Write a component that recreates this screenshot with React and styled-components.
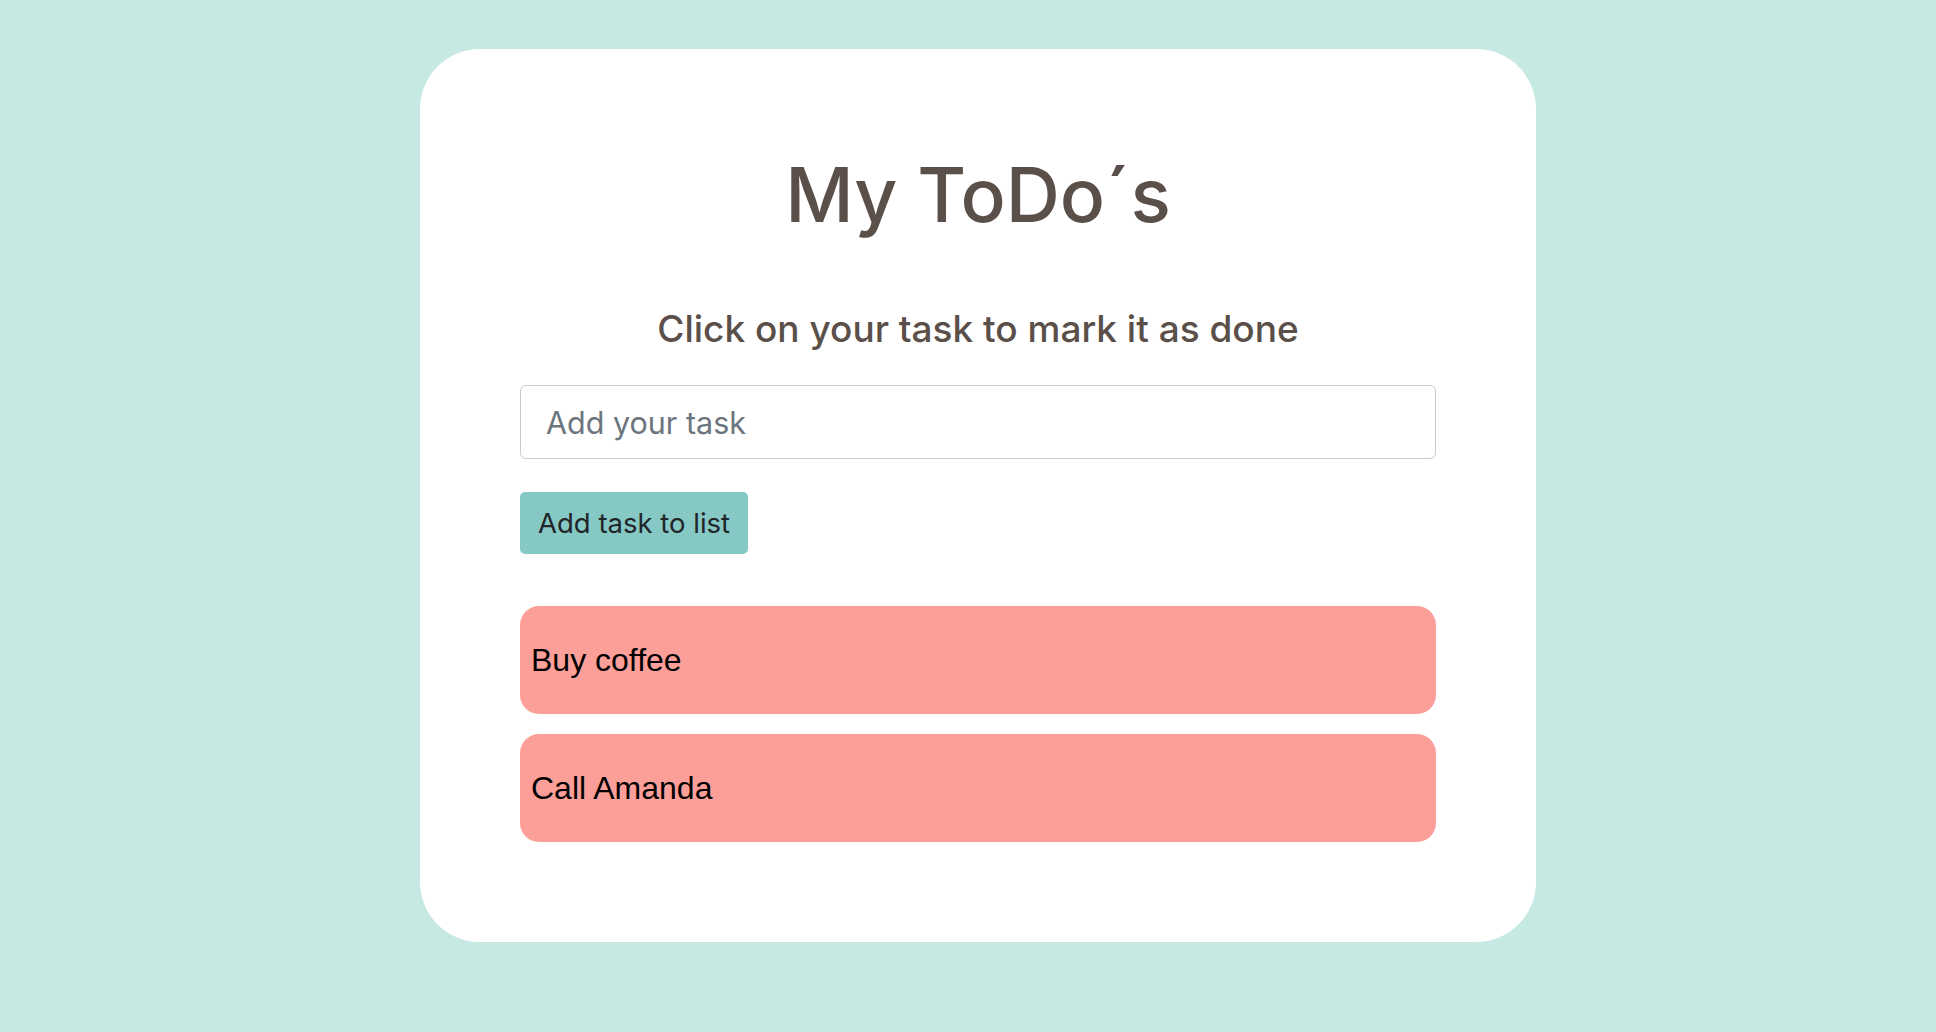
import React, { useState } from "react";
import styled, { createGlobalStyle } from "styled-components";

const GlobalStyle = createGlobalStyle`
    * { box-sizing: border-box; }
    body {
        margin: 0;
        background: #c6e9e3;
        font-family: 'Inter', 'Roboto', sans-serif;
    }
`;

function App() {
    const [tasks, setTasks] = useState([
        { text: "Buy coffee", done: false },
        { text: "Call Amanda", done: false },
    ]);
    const [value, setValue] = useState("");

    const handleAdd = () => {
        if (!value.trim()) return;
        setTasks([...tasks, { text: value, done: false }]);
        setValue("");
    };

    const handleToggle = index => {
        setTasks(tasks.map((t, i) => (i === index ? { ...t, done: !t.done } : t)));
    };

    return (
        <Page>
            <GlobalStyle />
            <Card>
                <Title>My ToDo´s</Title>
                <Subtitle>Click on your task to mark it as done</Subtitle>
                <Input
                    placeholder="Add your task"
                    value={value}
                    onChange={e => setValue(e.target.value)}
                />
                <AddButton onClick={handleAdd}>Add task to list</AddButton>
                <TaskList>
                    {tasks.map((task, id) => (
                        <TaskItem key={id} done={task.done} onClick={() => handleToggle(id)}>
                            {task.text}
                        </TaskItem>
                    ))}
                </TaskList>
            </Card>
        </Page>
    );
}

const Page = styled.div`
    display: flex;
    justify-content: center;
    padding: 49px 0 0 20px;
    min-height: 100vh;
`;

const Card = styled.div`
    display: flex;
    flex-direction: column;
    width: 1116px;
    height: 893px;
    padding: 0 100px 100px 100px;
    background: #ffffff;
    border-radius: 60px;
`;

const Title = styled.h1`
    margin: 99px 0 0;
    font-size: 75px;
    line-height: 94px;
    font-weight: 500;
    color: #5a4f49;
    text-align: center;
`;

const Subtitle = styled.h2`
    margin: 65px 0 0;
    font-size: 37px;
    line-height: 44px;
    font-weight: 500;
    color: #5a4f49;
    text-align: center;
`;

const Input = styled.input`
    margin-top: 34px;
    width: 100%;
    height: 74px;
    padding: 0 25px;
    border: 1.5px solid #c6ccd2;
    border-radius: 6px;
    font-family: 'Inter', 'Roboto', sans-serif;
    font-size: 30.5px;
    color: #212529;
    outline: none;

    &::placeholder {
        color: #6c757d;
    }
`;

const AddButton = styled.button`
    align-self: flex-start;
    margin-top: 33px;
    height: 62px;
    padding: 0 18px;
    border: none;
    border-radius: 5px;
    background: #86c8c4;
    font-family: 'Inter', 'Roboto', sans-serif;
    font-size: 27.5px;
    color: #212529;
    cursor: pointer;
`;

const TaskList = styled.div`
    display: flex;
    flex-direction: column;
    gap: 20px;
    margin-top: 52px;
`;

const TaskItem = styled.div`
    display: flex;
    align-items: center;
    height: 108px;
    padding: 0 11px;
    border-radius: 19px;
    background: ${props => (props.done ? "#b9e3c6" : "#fd9f99")};
    font-family: 'Liberation Sans', 'Helvetica', sans-serif;
    font-size: 32px;
    color: #000000;
    text-decoration: ${props => (props.done ? "line-through" : "none")};
    cursor: pointer;
`;

export default App;
